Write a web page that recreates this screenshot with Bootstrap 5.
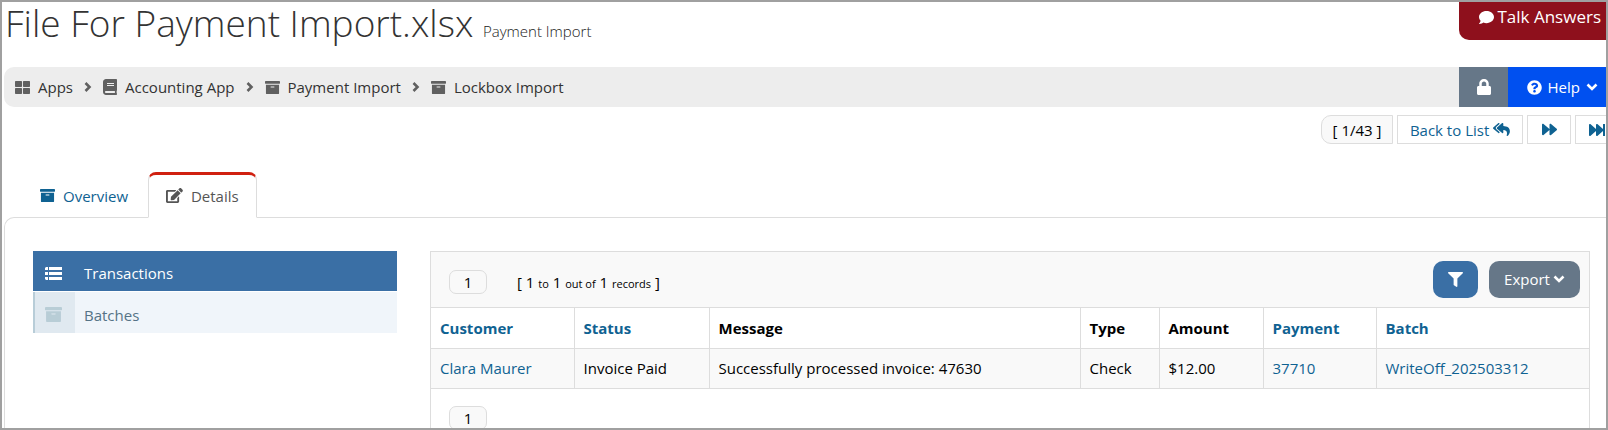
<!DOCTYPE html>
<html lang="en">
<head>
<meta charset="utf-8">
<meta name="viewport" content="width=device-width, initial-scale=1">
<title>File For Payment Import.xlsx</title>
<link href="https://cdn.jsdelivr.net/npm/bootstrap@5.3.0/dist/css/bootstrap.min.css" rel="stylesheet">
<style>
  body { font-family: "Open Sans", sans-serif; font-size: 15px; line-height: 20px; color: #000; background: #fff; height: 100vh; overflow: hidden; border: 2px solid #a0a0a0; }
  a { color: #0f6292; text-decoration: none; }
  .ico { height: 15px; width: auto; fill: currentColor; flex: none; }
  .ico-lg { height: 16px; }
  .ico-xl { height: 17px; }
  .chev { width: 12px; height: 12px; fill: none; stroke: currentColor; stroke-width: 2.6; flex: none; }
  .page-title { font-size: 37px; font-weight: 300; line-height: 42px; height: 44px; color: #333; padding-left: 3px; }
  .page-title small { font-size: 15px; line-height: 20px; font-weight: 300; color: #222; }
  .talk { background: #8e101c; color: #fff; height: 38px; width: 147px; font-size: 17px; line-height: 20px; border: 0; border-bottom-left-radius: 10px; padding: 0 5px 8px 0; }
  .crumbs { background: #ededed; height: 40px; margin: 21px 0 0 2px; border-radius: 10px 0 0 10px; }
  .crumbs ol { padding-left: 11px; gap: 9px; }
  .crumbs a { color: #333; gap: 8px; }
  .crumbs ol .ico, .crumbs ol .chev { color: #606060; }
  .bar-btn { height: 40px; border: 0; color: #fff; }
  .lock { width: 49px; background: #667788; }
  .help { width: 98px; background: #0050f0; gap: 6px; }
  .pager { gap: 4px; margin: 8px -13px 0 0; }
  .pager > * { height: 29px; border: 1px solid #ddd; background: #fff; color: #0f6292; display: flex; align-items: center; justify-content: center; gap: 4px; padding: 0; }
  .pager .count { width: 72px; background: #f9f9f9; color: #000; border-radius: 10px 0 0 10px; }
  .pager .back { width: 126px; }
  .pager .step { width: 44px; }
  .tabs { margin: 28px 0 0 20px; --bs-nav-tabs-border-width: 0; position: relative; z-index: 1; }
  .tabs .nav-link { display: flex; align-items: center; gap: 8px; height: 46px; padding: 0 17px 1px; border: 1px solid transparent; border-top: 3px solid transparent; border-radius: 8px 8px 0 0; color: #0f6292; margin: 0; }
  .tabs .nav-link.active { color: #555; background: #fff; border-color: #d02010 #ddd #fff; }
  .tabs .nav-item + .nav-item { margin-left: 2px; }
  .pane { border: 1px solid #ddd; border-width: 1px 0 0 1px; border-top-left-radius: 10px; margin: -1px 0 0 2px; padding: 33px 16px 0 28px; gap: 33px; }
  .side { width: 364px; flex: none; gap: 1px; }
  .side a { display: flex; align-items: center; height: 41px; background: #f0f5fa; color: #557386; }
  .side span { width: 42px; height: 41px; display: flex; align-items: center; justify-content: center; background: #e0e9f0; border-left: 2px solid #b8cdd8; color: #b8cdd6; margin-right: 9px; padding: 4px 3px 0 0; }
  .side b { font-weight: 400; padding-top: 4px; }
  .side a.active { height: 40px; background: #3a6fa5; color: #fff; }
  .side a.active span { height: 40px; background: none; border-color: transparent; color: #fff; }
  .grid-box { border: 1px solid #ddd; min-width: 0; }
  .grid-bar { height: 55px; background: #f9f9f9; padding: 0 9px 0 18px; }
  .page-no { width: 38px; height: 24px; border: 1px solid #ddd; border-radius: 7px; background: #f9f9f9; padding: 0; color: #000; line-height: 20px; }
  .grid-bar .page-no { margin-top: 4px; }
  .records { margin: 6px 0 0 30px; }
  .records small { font-size: 11px; }
  .tools { gap: 11px; }
  .tool { height: 37px; border: 0; border-radius: 10px; color: #fff; }
  .filter { width: 45px; background: #3a6fa5; }
  .export { width: 91px; background: #667788; gap: 3px; padding: 0 0 1px; }
  .data { table-layout: fixed; margin: 0; color: #000; border-top: 1px solid #ddd; }
  .data th, .data td { height: 40px; padding: 0 9px; border: 0 solid #ddd; border-bottom-width: 1px; border-left-width: 1px; vertical-align: middle; white-space: nowrap; }
  .data > :not(caption) > * > :first-child { border-left-width: 0; }
  .data th { height: 41px; font-weight: 700; }
  .data tbody td { background: #f9f9f9; color: #000; padding-bottom: 2px; }
  .c1 { width: 143px; } .c2 { width: 135px; } .c4 { width: 79px; } .c5 { width: 104px; } .c6 { width: 113px; } .c7 { width: 213px; }
  .grid-foot { padding: 17px 18px 0; }
</style>
</head>
<body>
<svg class="d-none" aria-hidden="true">
  <symbol id="archive" viewBox="0 0 512 512"><path d="M32 448c0 17.7 14.3 32 32 32h384c17.7 0 32-14.3 32-32V160H32v288zm160-212c0-6.6 5.4-12 12-12h104c6.6 0 12 5.4 12 12v8c0 6.6-5.4 12-12 12H204c-6.6 0-12-5.4-12-12v-8zM480 32H32C14.3 32 0 46.3 0 64v48c0 8.8 7.2 16 16 16h480c8.8 0 16-7.2 16-16V64c0-17.7-14.3-32-32-32z"/></symbol>
  <symbol id="down" viewBox="0 0 12 12"><path d="M1.500 3.500L6 8l4.500-4.500"/></symbol>
  <symbol id="right" viewBox="0 0 12 12"><path d="M3.500 2l4 4-4 4"/></symbol>
</svg>

<header class="d-flex justify-content-between align-items-start">
  <h1 class="page-title m-0">File For Payment Import.xlsx <small>Payment Import</small></h1>
  <button class="talk d-flex align-items-center justify-content-end gap-1" type="button">
    <svg class="ico" viewBox="0 0 512 512"><path d="M256 32C114.600 32 0 125.100 0 240c0 49.600 21.400 95 57 130.700C44.500 421.100 2.700 466 2.200 466.500c-2.200 2.300-2.800 5.700-1.500 8.700S4.800 480 8 480c66.300 0 116-31.800 140.600-51.400 32.700 12.300 69 19.400 107.400 19.400 141.400 0 256-93.100 256-208S397.400 32 256 32z"/></svg>Talk Answers</button>
</header>

<nav class="crumbs d-flex justify-content-between align-items-center" aria-label="Breadcrumb">
  <ol class="list-unstyled d-flex align-items-center m-0">
    <li><a href="#" class="d-flex align-items-center"><svg class="ico" viewBox="0 0 512 512"><path d="M296 32h192c13 0 24 11 24 24v160c0 13-11 24-24 24H296c-13 0-24-11-24-24V56c0-13 11-24 24-24zm-80 0H24C11 32 0 43 0 56v160c0 13 11 24 24 24h192c13 0 24-11 24-24V56c0-13-11-24-24-24zM0 296v160c0 13 11 24 24 24h192c13 0 24-11 24-24V296c0-13-11-24-24-24H24c-13 0-24 11-24 24zm296 184h192c13 0 24-11 24-24V296c0-13-11-24-24-24H296c-13 0-24 11-24 24v160c0 13 11 24 24 24z"/></svg>Apps</a></li>
    <li class="d-flex"><svg class="chev"><use href="#right"/></svg></li>
    <li><a href="#" class="d-flex align-items-center"><svg class="ico ico-lg" viewBox="0 0 448 512"><path fill-rule="evenodd" d="M448 360V24c0-13.300-10.700-24-24-24H96C43 0 0 43 0 96v320c0 53 43 96 96 96h328c13.300 0 24-10.700 24-24v-16c0-7.500-3.500-14.300-8.900-18.700-4.200-15.400-4.200-59.300 0-74.700 5.400-4.300 8.900-11.100 8.900-18.600zM128 128h224v32H128zm0 64h224v32H128zm253.400 256H96c-17.700 0-32-14.300-32-32 0-17.600 14.400-32 32-32h285.400c-1.900 17.100-1.900 46.900 0 64z"/></svg>Accounting App</a></li>
    <li class="d-flex"><svg class="chev"><use href="#right"/></svg></li>
    <li><a href="#" class="d-flex align-items-center"><svg class="ico" viewBox="0 0 512 512"><use href="#archive"/></svg>Payment Import</a></li>
    <li class="d-flex"><svg class="chev"><use href="#right"/></svg></li>
    <li><a href="#" class="d-flex align-items-center"><svg class="ico" viewBox="0 0 512 512"><use href="#archive"/></svg>Lockbox Import</a></li>
  </ol>
  <div class="d-flex">
    <button class="bar-btn lock d-flex align-items-center justify-content-center" type="button" aria-label="Lock"><svg class="ico ico-lg" viewBox="0 0 448 512"><path d="M400 224h-24v-72C376 68.200 307.800 0 224 0S72 68.200 72 152v72H48c-26.500 0-48 21.500-48 48v192c0 26.500 21.500 48 48 48h352c26.500 0 48-21.500 48-48V272c0-26.500-21.500-48-48-48zm-104 0H152v-72c0-39.700 32.300-72 72-72s72 32.300 72 72v72z"/></svg></button>
    <button class="bar-btn help d-flex align-items-center justify-content-end pe-2" type="button"><svg class="ico" viewBox="0 0 512 512"><path d="M504 256c0 137-111 248-248 248S8 393 8 256C8 119 119 8 256 8s248 111 248 248zM262.655 90c-54.497 0-89.255 22.957-116.549 63.758-3.536 5.286-2.353 12.415 2.715 16.258l34.699 26.310c5.205 3.947 12.621 3.008 16.665-2.122 17.864-22.658 30.113-35.797 57.303-35.797 20.429 0 45.698 13.148 45.698 32.958 0 14.976-12.363 22.667-32.534 33.976C247.128 238.528 216 254.941 216 296v4c0 6.627 5.373 12 12 12h56c6.627 0 12-5.373 12-12v-1.333c0-28.462 83.186-29.647 83.186-106.667 0-58.002-60.165-102-116.531-102zM256 338c-25.365 0-46 20.635-46 46 0 25.364 20.635 46 46 46s46-20.636 46-46c0-25.365-20.635-46-46-46z"/></svg><span>Help</span><svg class="chev"><use href="#down"/></svg></button>
  </div>
</nav>

<div class="pager d-flex justify-content-end">
  <span class="count">[ 1/43 ]</span>
  <a class="back" href="#">Back to List <svg class="ico" viewBox="0 0 576 512"><path d="M136.309 189.836L312.313 37.851C327.720 24.546 352 35.348 352 56.015v82.763c129.182 10.231 224 52.212 224 183.548 0 61.441-39.582 122.309-83.333 154.132-13.653 9.931-33.111-2.533-28.077-18.631 38.512-123.162-3.922-169.482-112.590-182.015v84.175c0 20.701-24.300 31.453-39.687 18.164L136.309 226.164c-11.071-9.561-11.086-26.753 0-36.328zm-128 36.328L184.313 378.150C199.700 391.439 224 380.687 224 359.986v-15.818l-108.606-93.785A55.960 55.960 0 0 1 96 207.998a55.953 55.953 0 0 1 19.393-42.380L224 71.832V56.015c0-20.667-24.280-31.469-39.687-18.164L8.309 189.836c-11.086 9.575-11.071 26.767 0 36.328z"/></svg></a>
  <a class="step" href="#" aria-label="Next"><svg class="ico" viewBox="0 0 512 512"><path d="M500.500 231.400l-192-160C287.900 54.300 256 68.600 256 96v320c0 27.400 31.900 41.800 52.500 24.600l192-160c15.300-12.800 15.300-36.400 0-49.200zm-256 0l-192-160C31.900 54.300 0 68.600 0 96v320c0 27.400 31.900 41.800 52.500 24.600l192-160c15.300-12.800 15.300-36.400 0-49.200z"/></svg></a>
  <a class="step" href="#" aria-label="Last"><svg class="ico ico-lg" viewBox="0 0 512 512"><path d="M512 76v360c0 6.600-5.400 12-12 12h-40c-6.600 0-12-5.400-12-12V284.100L276.500 440.600c-20.600 17.200-52.500 2.800-52.500-24.600V284.100L52.500 440.600C31.900 457.800 0 443.400 0 416V96c0-27.400 31.900-41.700 52.500-24.600L224 226.800V96c0-27.400 31.900-41.700 52.500-24.600L448 226.800V76c0-6.600 5.400-12 12-12h40c6.600 0 12 5.400 12 12z"/></svg></a>
</div>

<ul class="nav nav-tabs tabs">
  <li class="nav-item"><a class="nav-link" href="#"><svg class="ico" viewBox="0 0 512 512"><use href="#archive"/></svg>Overview</a></li>
  <li class="nav-item"><a class="nav-link active" href="#" aria-current="page"><svg class="ico" viewBox="0 0 576 512"><path d="M402.600 83.200l90.200 90.200c3.800 3.800 3.800 10 0 13.800L274.400 405.600l-92.800 10.300c-12.400 1.400-22.900-9.100-21.500-21.500l10.300-92.800L388.800 83.200c3.800-3.800 10-3.800 13.800 0zm162-22.900l-48.800-48.800c-15.200-15.200-39.900-15.200-55.200 0l-35.400 35.400c-3.800 3.800-3.800 10 0 13.800l90.200 90.200c3.800 3.800 10 3.800 13.800 0l35.400-35.400c15.200-15.300 15.200-40 0-55.200zM384 346.200V448H64V128h229.800c3.200 0 6.200-1.300 8.500-3.500l40-40c7.600-7.600 2.200-20.500-8.500-20.500H48C21.500 64 0 85.500 0 112v352c0 26.500 21.500 48 48 48h352c26.500 0 48-21.500 48-48V306.200c0-10.700-12.900-16-20.500-8.500l-40 40c-2.200 2.300-3.500 5.300-3.500 8.500z"/></svg>Details</a></li>
</ul>

<main class="pane d-flex align-items-start">
  <nav class="side d-flex flex-column" aria-label="Details">
    <a class="active" href="#"><span><svg class="ico" viewBox="0 0 17 15"><path d="M1 1h2v3H0V2zM0 6h3v3H0zM0 11h3v3H1l-1-1zM4 1h13v3H4zM4 6h13v3H4zM4 11h13v3H4z"/></svg></span><b>Transactions</b></a>
    <a href="#"><span><svg class="ico ico-xl" viewBox="0 0 512 512"><use href="#archive"/></svg></span><b>Batches</b></a>
  </nav>
  <section class="grid-box flex-grow-1">
    <div class="grid-bar d-flex align-items-center">
      <button class="page-no" type="button">1</button>
      <div class="records">[ 1 <small>to</small> 1 <small>out of</small> 1 <small>records</small> ]</div>
      <div class="tools d-flex ms-auto">
        <button class="tool filter d-flex align-items-center justify-content-center" type="button" aria-label="Filter"><svg class="ico" viewBox="0 0 512 512"><path d="M488 0H24C2.700 0-8 25.900 7 41l185 185v206c0 7.800 3.800 15.200 10.200 19.700l80 56C298 518.700 320 507.500 320 488V226L505 41C520 25.900 509.300 0 488 0z"/></svg></button>
        <button class="tool export d-flex align-items-center justify-content-center" type="button">Export<svg class="chev"><use href="#down"/></svg></button>
      </div>
    </div>
    <table class="table data">
      <colgroup><col class="c1"><col class="c2"><col><col class="c4"><col class="c5"><col class="c6"><col class="c7"></colgroup>
      <thead><tr><th><a href="#">Customer</a></th><th><a href="#">Status</a></th><th>Message</th><th>Type</th><th>Amount</th><th><a href="#">Payment</a></th><th><a href="#">Batch</a></th></tr></thead>
      <tbody><tr><td><a href="#">Clara Maurer</a></td><td>Invoice Paid</td><td>Successfully processed invoice: 47630</td><td>Check</td><td>$12.00</td><td><a href="#">37710</a></td><td><a href="#">WriteOff_202503312</a></td></tr></tbody>
    </table>
    <div class="grid-foot"><button class="page-no" type="button">1</button></div>
  </section>
</main>
<script src="https://cdn.jsdelivr.net/npm/bootstrap@5.3.0/dist/js/bootstrap.bundle.min.js"></script>
</body>
</html>
